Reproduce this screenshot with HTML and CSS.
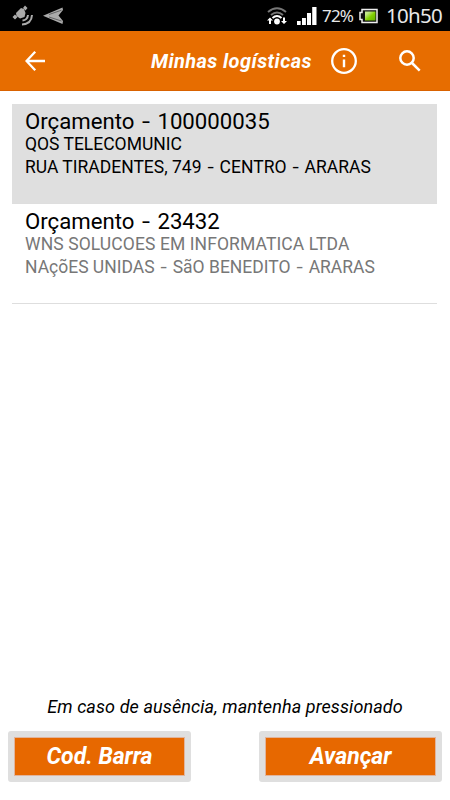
FILE: index.html
```html
<!DOCTYPE html>
<html lang="pt-BR">
<head>
<meta charset="utf-8">
<meta name="viewport" content="width=device-width">
<title>Minhas logísticas</title>
<link rel="stylesheet" href="styles.css">
</head>
<body>
<div class="screen">
  <div class="status">
    <svg class="satellite" width="22" height="22" viewBox="0 0 22 22" fill="#aaa">
      <path d="M4 8 9 3 12 4 13.500 8 12.500 12 8 13.500 4.500 11Z"/>
      <path d="M11 3 13 .5 15.500 3 13.500 5.500ZM.5 12 3 9.500 5.500 12 3 14.500Z"/>
      <path d="M10.500 15.500Q15.500 15 16 10M10 19.500Q19.500 19 20 10" fill="none" stroke="#aaa" stroke-width="2"/>
    </svg>
    <svg class="plane" width="21" height="18" viewBox="0 0 21 18" fill="#aaa">
      <path d="M0 8.700 19.500.5 20 3 15.500 8.500 20 14 19.500 17Z"/>
      <path d="M6 7.500 18.500 3.200M6 10 18.500 14" stroke="#444" stroke-width=".7"/>
    </svg>
    <svg class="wifi" width="20" height="18" viewBox="0 0 20 18">
      <g fill="none" stroke="#777" stroke-width="2"><path d="M1 5Q10-2.500 19 5M4 8Q10 3 16 8" /></g>
      <path d="M5.500 11Q10 7 14.500 11" fill="none" stroke="#fff" stroke-width="2"/>
      <circle cx="10" cy="14.500" r="2.900" fill="#fff"/>
      <path d="M0 13.500 3 10.500 6 13.500H4V17H2v-3.500ZM16 10.500h2V14h2l-3 3-3-3h2Z" fill="#fff"/>
    </svg>
    <svg class="signal" width="20" height="18" viewBox="0 0 20 18" fill="#fff"><path d="M0 14h3.700v4H0ZM5 11h3.900v7H5ZM10 6h4v12h-4ZM15.200 0h4.300v18h-4.300Z"/></svg>
    <span class="percent">72%</span>
    <svg class="battery" width="19" height="16" viewBox="0 0 19 16">
      <defs><linearGradient id="charge" x2="1" y2="1"><stop offset=".2" stop-color="#c5e88c"/><stop offset=".55" stop-color="#82d000"/><stop offset="1" stop-color="#62ae00"/></linearGradient></defs>
      <path d="M3 1.500h15v13H3v-3H1v-7h2Z" fill="#111" stroke="#eee" stroke-width="1.500"/>
      <path d="M6 3.500h10.500v9H6Z" fill="url(#charge)"/>
    </svg>
    <span class="clock">10h50</span>
  </div>
  <header class="bar">
    <svg class="back" width="20" height="20" viewBox="0 0 20 20" fill="none" stroke="#fff" stroke-width="2.300"><path d="M10.200.8 1.500 10l8.700 9.200M1.500 10H20"/></svg>
    <h1 class="heading">Minhas logísticas</h1>
    <svg class="info" width="26" height="26" viewBox="0 0 26 26"><circle cx="13" cy="13" r="11.800" fill="none" stroke="#fff" stroke-width="2.300"/><path d="M11.800 6.700h2.400v2.400h-2.400ZM11.800 11.500h2.400v7.700h-2.400Z" fill="#fff"/></svg>
    <svg class="search" width="22" height="22" viewBox="0 0 22 22" fill="none" stroke="#fff" stroke-width="2.500"><circle cx="8" cy="8" r="6.700"/><path d="m13 13 7.700 7.700"/></svg>
  </header>
  <main class="list">
    <article class="item selected">
      <h2 class="title">Orçamento <span class="dash">-</span> 100000035</h2>
      <p class="line">QOS TELECOMUNIC</p>
      <p class="line">RUA TIRADENTES, 749 <span class="dash">-</span> CENTRO <span class="dash">-</span> ARARAS</p>
    </article>
    <article class="item">
      <h2 class="title">Orçamento <span class="dash">-</span> 23432</h2>
      <p class="line wide">WNS SOLUCOES EM INFORMATICA LTDA</p>
      <p class="line">NAçõES UNIDAS <span class="dash">-</span> SãO BENEDITO <span class="dash">-</span> ARARAS</p>
    </article>
  </main>
  <footer class="footer">
    <p class="hint">Em caso de ausência, mantenha pressionado</p>
    <div class="actions"><button class="button">Cod. Barra</button><button class="button">Avançar</button></div>
  </footer>
</div>
</body>
</html>
```
FILE: styles.css
```css
* { box-sizing: border-box; }
body, h1, h2, p { margin: 0; }
body { font-family: Roboto, sans-serif; background: #fff; color: #000; }
svg { flex: none; display: block; }
.screen { width: 450px; height: 800px; display: flex; flex-direction: column; }
.status { height: 31px; background: #000; color: #e8e8e8; display: flex; align-items: center; font-family: "Noto Sans", sans-serif; padding-left: 12px; white-space: nowrap; }
.plane { margin-left: 9px; }
.wifi { margin-left: 203px; }
.signal { margin-left: 10px; }
.percent { width: 31px; margin-left: 5px; font-size: 17px; letter-spacing: -.8px; }
.battery { margin-left: 6px; }
.clock { margin-left: 8px; padding-bottom: 2px; font-size: 20.500px; letter-spacing: -.7px; }
.bar { height: 60px; background: #e76d00; border-bottom: 1px solid #d96200; display: flex; align-items: center; padding-left: 25px; color: #fff; }
.heading { width: 161px; margin-left: 106px; font-size: 20px; font-weight: 700; font-style: italic; letter-spacing: .42px; white-space: nowrap; }
.info { margin-left: 19px; }
.search { margin-left: 42px; }
.list { flex: 1; padding: 13px 13px 0 12px; }
.item { height: 100px; padding: 5px 13px 0; border-bottom: 1px solid #dedede; color: #777; white-space: nowrap; }
.selected { background: #dfdfdf; color: #000; }
.title { font-size: 22.200px; line-height: 24px; padding-bottom: 2px; font-weight: 400; color: #000; }
.line { font-size: 17.500px; line-height: 22.500px; margin-top: -2px; }
.line + .line { margin-top: 0; }
.wide { letter-spacing: .1px; }
.dash { display: inline-block; width: .54em; text-align: center; transform: scaleX(1.3); }
.footer { height: 104px; padding: 0 8px; }
.hint { text-align: center; font-size: 18px; line-height: 22px; font-style: italic; letter-spacing: .1px; }
.actions { display: flex; justify-content: space-between; margin-top: 13px; }
.button { width: 183px; height: 51px; padding: 0; border: 6px solid #dfdfdf; border-radius: 3px; background: #e76800; box-shadow: inset 0 0 0 1px #e1b49c; color: #fff; font: italic 700 23px Roboto, sans-serif; }
```
